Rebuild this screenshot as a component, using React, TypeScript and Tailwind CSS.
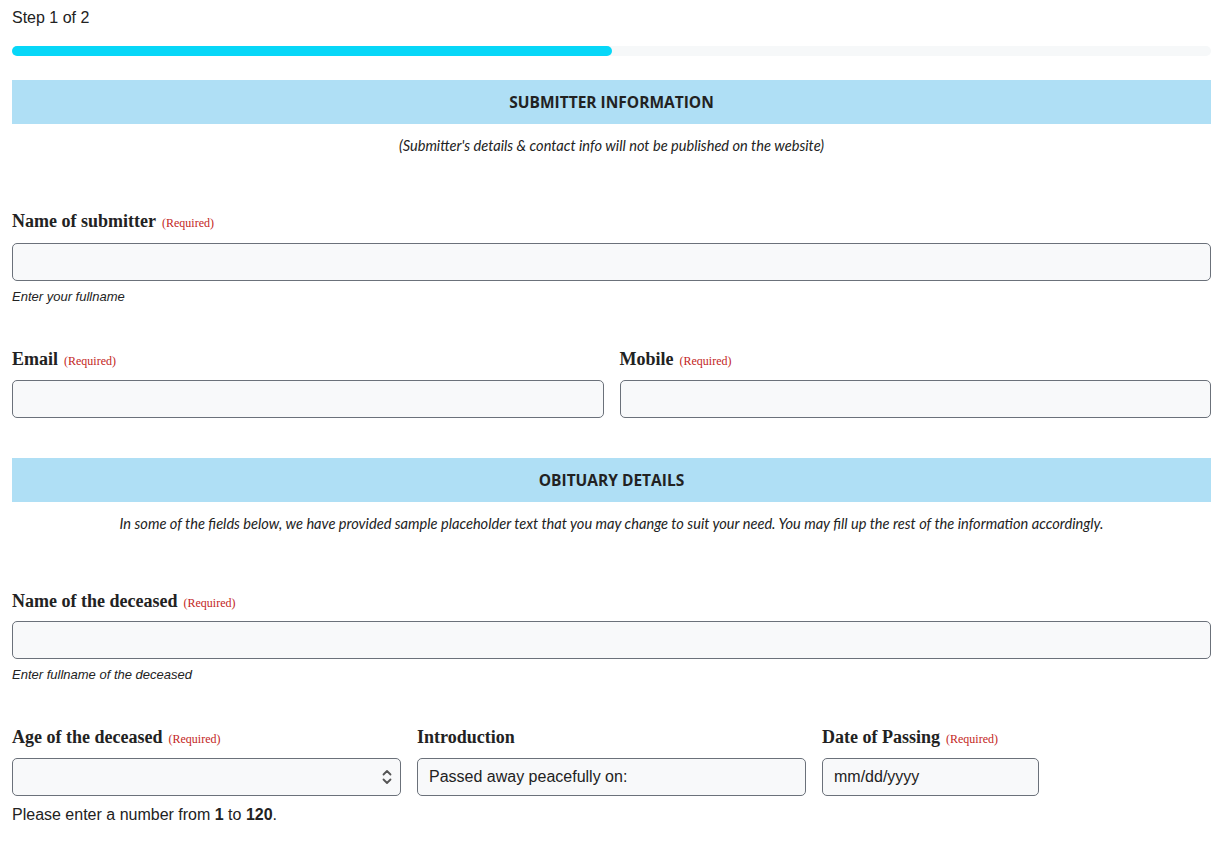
import React from "react";

const serif = "font-['Liberation_Serif','Times_New_Roman',serif]";
const sans = "font-['Liberation_Sans',Arial,sans-serif]";
const humanist = "font-['Lato','Open_Sans',sans-serif]";

function Label({ text, required }: { text: string; required?: boolean }) {
    return (
        <div className={`${serif} h-[24px] flex items-baseline gap-[6px] text-[#222]`}>
            <span className="text-[18px] font-bold leading-[25px]">{text}</span>
            {required && <span className="text-[12px] text-[#c3261c]">(Required)</span>}
        </div>
    );
}

function Field({ value, width }: { value?: string; width?: string }) {
    return (
        <div className={`h-[38px] ${width ?? "w-full"} rounded-[5px] border border-[#6b717a] bg-[#f8f9fa] flex items-center px-[11px] ${sans} text-[16px] text-[#222]`}>
            {value}
        </div>
    );
}

function SectionHeader({ title, note }: { title: string; note: string }) {
    return (
        <>
            <div className="h-[44px] bg-[#afdff5] flex items-center justify-center pt-[2px]">
                <span className="font-['Open_Sans',sans-serif] font-bold text-[15.5px] text-[#222]">{title}</span>
            </div>
            <p className={`${humanist} italic text-[14.6px] leading-[20px] text-[#222] text-center mt-[12px]`}>{note}</p>
        </>
    );
}

export default function App() {
    return (
        <div className="w-full min-h-screen bg-white px-3 pt-[6px]">
            <div className={`${sans} text-[16px] leading-[24px] text-[#222]`}>Step 1 of 2</div>

            <div className="mt-[16px] h-[10px] w-full rounded-full bg-[#f6f8f9]">
                <div className="h-full w-1/2 rounded-full bg-[#07d7f8]" />
            </div>

            <div className="mt-[24px]">
                <SectionHeader
                    title="SUBMITTER INFORMATION"
                    note="(Submitter's details & contact info will not be published on the website)"
                />
            </div>

            <div className="mt-[53px]">
                <Label text="Name of submitter" required />
                <div className="mt-[10px]">
                    <Field />
                </div>
                <p className={`${sans} italic text-[13px] leading-[18px] text-[#222] mt-[7px]`}>Enter your fullname</p>
            </div>

            <div className="mt-[41px] grid grid-cols-2 gap-4">
                <div>
                    <Label text="Email" required />
                    <div className="mt-[9px]"><Field /></div>
                </div>
                <div>
                    <Label text="Mobile" required />
                    <div className="mt-[9px]"><Field /></div>
                </div>
            </div>

            <div className="mt-[40px]">
                <SectionHeader
                    title="OBITUARY DETAILS"
                    note="In some of the fields below, we have provided sample placeholder text that you may change to suit your need. You may fill up the rest of the information accordingly."
                />
            </div>

            <div className="mt-[55px]">
                <Label text="Name of the deceased" required />
                <div className="mt-[8px]">
                    <Field />
                </div>
                <p className={`${sans} italic text-[13px] leading-[18px] text-[#222] mt-[7px]`}>Enter fullname of the deceased</p>
            </div>

            <div className="mt-[41px] grid grid-cols-3 gap-4">
                <div>
                    <Label text="Age of the deceased" required />
                    <div className="mt-[9px] relative">
                        <Field />
                        <svg className="absolute right-[9px] top-[11px]" width="10" height="16" viewBox="0 0 10 16" fill="none" stroke="#555" strokeWidth="1.8" strokeLinecap="round" strokeLinejoin="round">
                            <path d="M1.5 5.5 L5 2 L8.5 5.5" />
                            <path d="M1.5 10.5 L5 14 L8.5 10.5" />
                        </svg>
                    </div>
                    <p className={`${sans} text-[16px] leading-[24px] text-[#222] mt-[7px]`}>
                        Please enter a number from <b>1</b> to <b>120</b>.
                    </p>
                </div>
                <div>
                    <Label text="Introduction" />
                    <div className="mt-[9px]"><Field value="Passed away peacefully on:" /></div>
                </div>
                <div>
                    <Label text="Date of Passing" required />
                    <div className="mt-[9px]"><Field value="mm/dd/yyyy" width="w-[217px]" /></div>
                </div>
            </div>
        </div>
    );
}
